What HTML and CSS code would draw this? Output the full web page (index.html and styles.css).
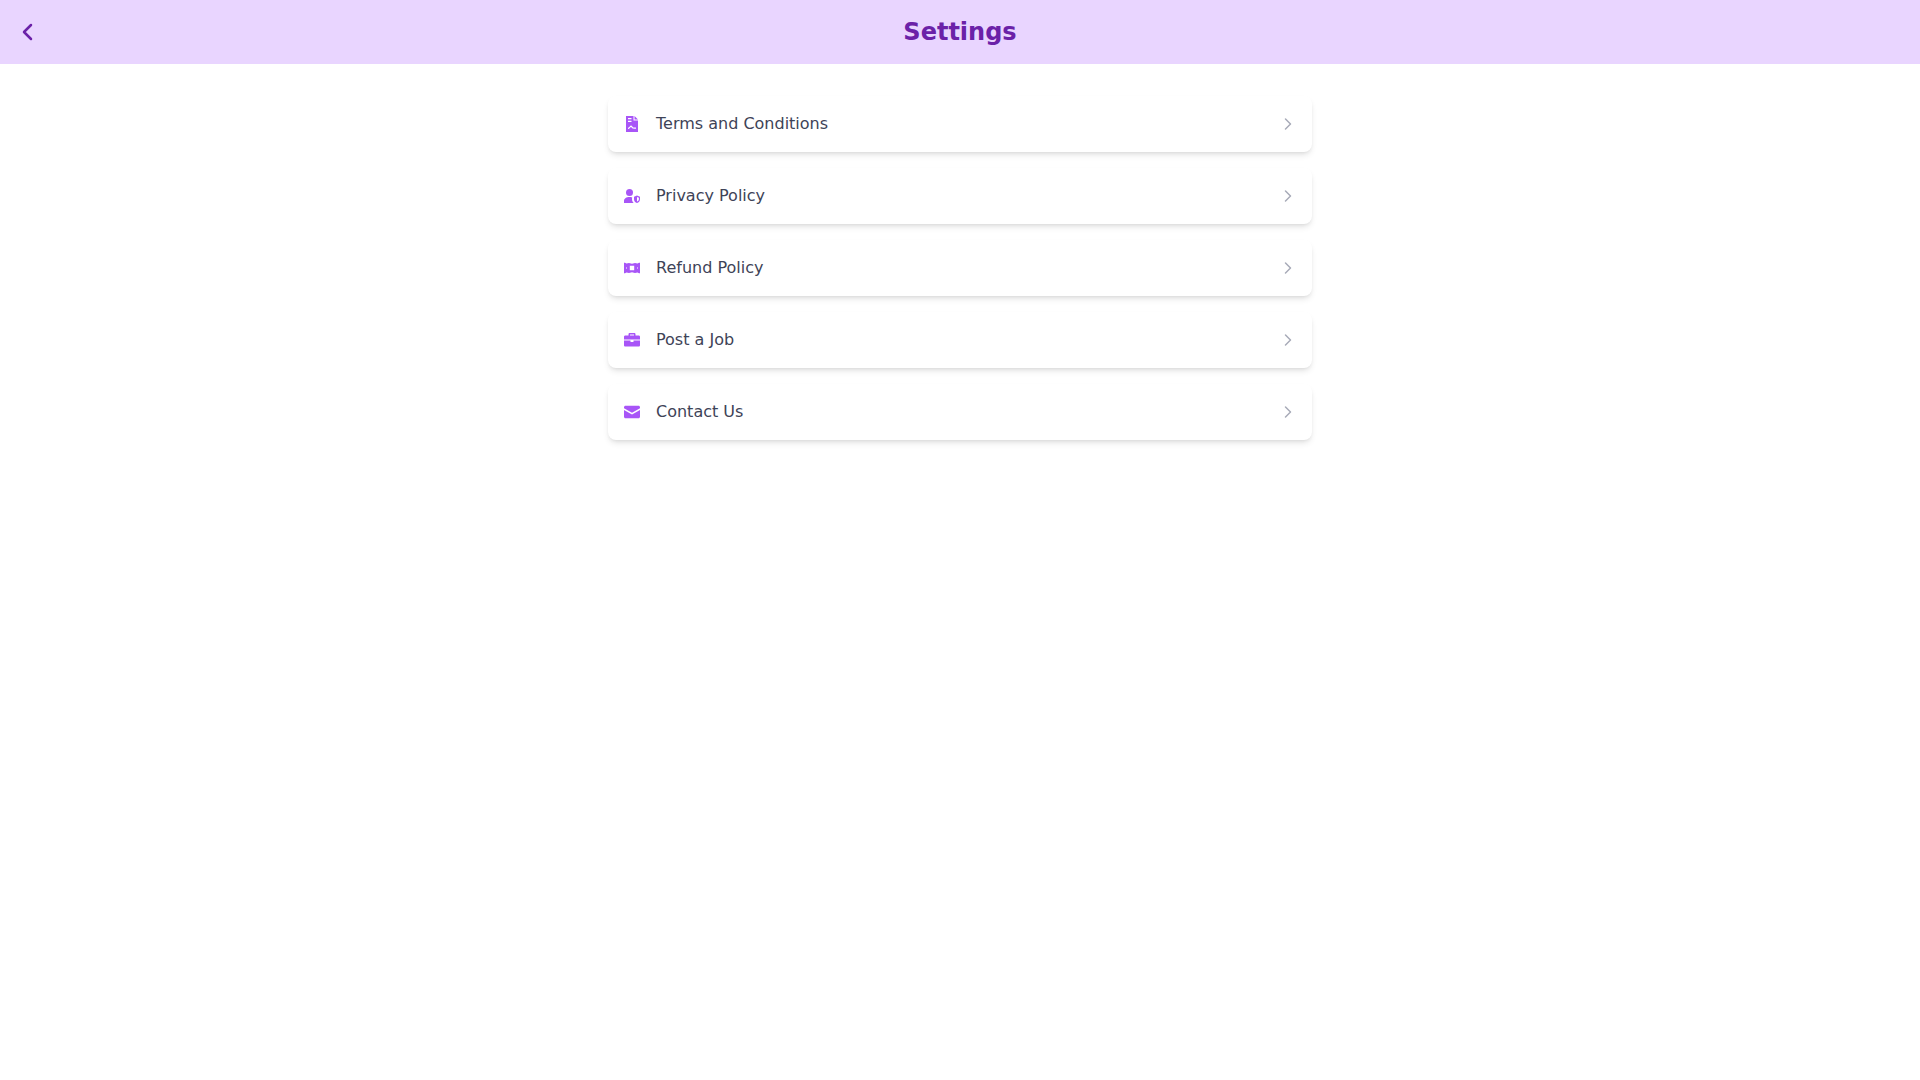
FILE: index.html
```html
<!DOCTYPE html>
<html lang="en">
<head>
    <meta charset="UTF-8">
    <meta name="viewport" content="width=device-width, initial-scale=1.0">
    <title>Settings</title>
    <link rel="stylesheet" href="styles.css">
</head>
<body>

<!-- Header -->
<header class="top-bar">
    <a href="#" class="back-link" aria-label="Back">
        <svg class="back-icon" viewBox="0 0 24 24"><path d="M15 5l-7 7 7 7"/></svg>
    </a>
    <h1 class="page-title">Settings</h1>
</header>

<!-- Settings list -->
<main class="container">
    <a href="#" class="item">
        <svg class="item-icon" viewBox="0 0 16 16"><path fill-rule="evenodd" d="M2 0h7.500v4.500H14V16H2zM4 2v1.200h3.500V2zM4 4.700v1.200h3.500V4.700zM4 11.800c1.300 0 1.900-2.300 3.100-2.300 1 0 1.200 1.600 2.200 1.900.8.200 1.700.2 2.700.2v1.100c-1.200 0-2.300 0-3.200-.3-.9-.3-1.200-1.500-1.800-1.500-.7 0-1.300 2-3 2z"/><path d="M10.500 0L14 3.500h-3.500z"/></svg>
        <span class="item-label">Terms and Conditions</span>
        <svg class="chevron" viewBox="0 0 16 16"><path d="M5.500 3L10.500 8 5.500 13"/></svg>
    </a>
    <a href="#" class="item">
        <svg class="item-icon" viewBox="0 0 16 16"><circle cx="5.500" cy="4.500" r="3.500"/><path d="M0 15v-2c0-2.500 2.500-4 5.500-4 1 0 1.900.1 2.700.4-.1.500-.2 1-.2 1.600 0 1.600.6 3 1.700 4z"/><path fill-rule="evenodd" d="M13 7.500l3 1.200v2.500c0 2-1.300 3.300-3 3.800-1.700-.5-3-1.800-3-3.800V8.700zM13 9v4.600c1-.4 1.900-1.200 1.900-2.400V9.700z"/></svg>
        <span class="item-label">Privacy Policy</span>
        <svg class="chevron" viewBox="0 0 16 16"><path d="M5.500 3L10.500 8 5.500 13"/></svg>
    </a>
    <a href="#" class="item">
        <svg class="item-icon" viewBox="0 0 16 16"><path fill-rule="evenodd" d="M0 2.800h1l1.500.7L5 3.100l3 .7 3-.7 2.500.4 1.500-.7h1v10.400h-1l-1.500-.7-2.500.4-3-.7-3 .7-2.500-.4-1.500.7H0zM5.800 5.800v4.400h4.400V5.800zM2 7.500v1h1v-1zM13 7.500v1h1v-1z"/></svg>
        <span class="item-label">Refund Policy</span>
        <svg class="chevron" viewBox="0 0 16 16"><path d="M5.500 3L10.500 8 5.500 13"/></svg>
    </a>
    <a href="#" class="item">
        <svg class="item-icon" viewBox="0 0 16 16"><path fill-rule="evenodd" d="M4.500 3.500V2.200C4.500 1.500 5 1 5.700 1h4.600c.7 0 1.200.5 1.200 1.200v1.300h3.200c.7 0 1.300.6 1.300 1.300v2.700H0V4.800c0-.7.600-1.300 1.300-1.300zM6 2.500v1h4v-1z"/><path d="M0 8.500h6.500V10h3V8.500H16v4.700c0 .7-.6 1.300-1.300 1.300H1.300C.6 14.500 0 13.900 0 13.200z"/></svg>
        <span class="item-label">Post a Job</span>
        <svg class="chevron" viewBox="0 0 16 16"><path d="M5.500 3L10.500 8 5.500 13"/></svg>
    </a>
    <a href="#" class="item">
        <svg class="item-icon" viewBox="0 0 16 16"><path d="M1.500 1.800h13c.8 0 1.500.7 1.500 1.500v.9L8 8.700 0 4.200v-.9c0-.8.700-1.500 1.500-1.500z"/><path d="M0 5.900l8 4.500 8-4.500v6.800c0 .8-.7 1.500-1.500 1.500h-13c-.8 0-1.500-.7-1.500-1.500z"/></svg>
        <span class="item-label">Contact Us</span>
        <svg class="chevron" viewBox="0 0 16 16"><path d="M5.500 3L10.500 8 5.500 13"/></svg>
    </a>
</main>

</body>
</html>
```
FILE: styles.css
```css
/* General Body Styles */
body {
    margin: 0;
    min-height: 100vh;
    background-color: #fff;
    font-family: "DejaVu Sans", sans-serif;
}

/* Header */
.top-bar {
    position: relative;
    height: 64px;
    display: flex;
    align-items: center;
    justify-content: center;
    background-color: #e9d5ff;
}

.back-link {
    position: absolute;
    left: 16px;
    top: 20px;
    display: flex;
}

.back-icon {
    width: 24px;
    height: 24px;
    fill: none;
    stroke: #6b21a8;
    stroke-width: 2.5;
    stroke-linecap: round;
    stroke-linejoin: round;
}

.page-title {
    margin: 0;
    font-size: 24px;
    line-height: 32px;
    font-weight: 700;
    color: #6b21a8;
}

/* Settings list */
.container {
    width: 704px;
    margin: 0 auto;
    padding-top: 32px;
    display: flex;
    flex-direction: column;
    gap: 16px;
}

.item {
    display: flex;
    align-items: center;
    height: 56px;
    padding: 0 16px;
    background-color: #fff;
    border-radius: 8px;
    box-shadow: 0 4px 6px -1px rgba(0, 0, 0, 0.1), 0 2px 4px -2px rgba(0, 0, 0, 0.1);
    text-decoration: none;
}

.item-icon {
    width: 16px;
    height: 16px;
    margin-right: 16px;
    fill: #a855f7;
    flex-shrink: 0;
}

.item-label {
    flex: 1;
    font-size: 16px;
    line-height: 24px;
    color: #3e4357;
}

.chevron {
    width: 16px;
    height: 16px;
    fill: none;
    stroke: #a8abb8;
    stroke-width: 1.5;
    stroke-linecap: round;
    stroke-linejoin: round;
}
```
